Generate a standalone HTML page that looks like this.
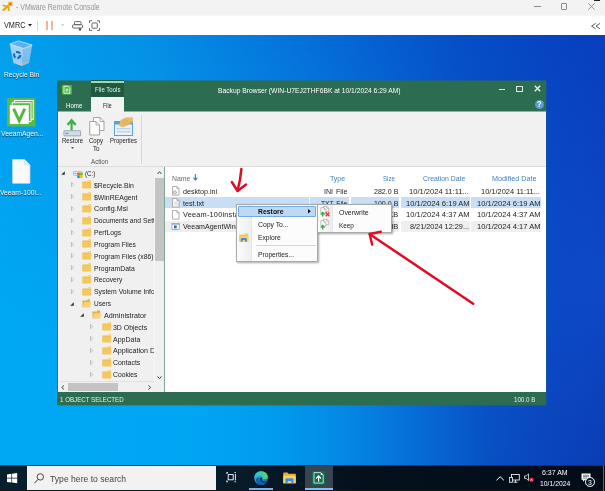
<!DOCTYPE html>
<html lang="en"><head><meta charset="utf-8"><title>VMware Remote Console</title><style>
html,body{margin:0;padding:0;overflow:hidden;}
body{width:605px;height:491px;overflow:hidden;position:relative;background:#0a50c0;font-family:"Liberation Sans",sans-serif;}
body div,body svg,body span.t{position:absolute;}
svg{overflow:visible;display:block;}
.t{white-space:nowrap;line-height:12px;transform-origin:0 50%;}
#desk{background:radial-gradient(ellipse 170px 260px at 100% 58%,rgba(18,86,220,.55) 0%,rgba(18,86,220,0) 100%),linear-gradient(90deg,#03a0ee 0%,#0590e6 25%,#0670da 50%,#0650c8 75%,#083ebe 100%);}
#desk2{background:radial-gradient(ellipse 170px 260px at 100% 58%,rgba(18,86,220,.55) 0%,rgba(18,86,220,0) 100%),linear-gradient(90deg,#00a8f4 0%,#00a6f3 30%,#019cee 45%,#0488e4 57%,#066cd6 69%,#0850c2 81%,#083fb4 93%,#0838ac 100%);-webkit-mask-image:linear-gradient(to bottom,rgba(0,0,0,0) 0%,rgba(0,0,0,1) 75%);mask-image:linear-gradient(to bottom,rgba(0,0,0,0) 0%,rgba(0,0,0,1) 75%);}
</style></head><body>
<div style="left:0px;top:0px;width:605px;height:16px;background:#f3f3f3;"></div>
<div style="left:0px;top:16px;width:605px;height:19px;background:#ffffff;"></div>
<div style="left:0px;top:15px;width:605px;height:1px;background:#f6f6f6;"></div>
<svg style="left:0px;top:0px;" width="14" height="14" viewBox="0 0 14 14"><path d="M3.4 10 L9.6 4.6" stroke="#f0a414" stroke-width="2.3" stroke-linecap="round"/><rect x="8.3" y="1.8" width="4.2" height="4.2" rx="0.6" fill="#f5b61a"/><circle cx="10.3" cy="4" r="0.95" fill="#e5482c"/><path d="M3.2 5.3 L7 6.7" stroke="#eea012" stroke-width="1.6" stroke-linecap="round"/><path d="M8.6 7.4 L9 10.4" stroke="#eea012" stroke-width="1.6" stroke-linecap="round"/></svg>
<span class="t" style="left:15.50px;top:2px;font-size:8.20px;color:#949494;transform:scaleX(0.8515);">- VMware Remote Console</span>
<div style="left:534.4px;top:6px;width:6.6px;height:1px;background:#8a8a8a;"></div>
<div style="left:561px;top:3.2px;width:6.4px;height:6.4px;background:transparent;border:1px solid #8a8a8a;box-sizing:border-box;border-radius:1px;"></div>
<svg style="left:588px;top:3px;" width="7" height="7" viewBox="0 0 7 7"><path d="M0.3 0.3 L6.7 6.7 M6.7 0.3 L0.3 6.7" stroke="#8a8a8a" stroke-width="0.9" fill="none"/></svg>
<div style="left:594px;top:0px;width:6px;height:1px;background:#222;"></div>
<span class="t" style="left:4.40px;top:20px;font-size:8.20px;color:#222;transform:scaleX(0.8876);">VMRC</span>
<svg style="left:28px;top:23.8px;" width="4" height="3" viewBox="0 0 4 3"><path d="M0 0 L4 0 L2 2.6 Z" fill="#222"/></svg>
<div style="left:37px;top:20.8px;width:1px;height:10px;background:#d8d8d8;"></div>
<div style="left:46.2px;top:20.8px;width:2px;height:9.2px;background:#f7b298;"></div>
<div style="left:51.4px;top:20.8px;width:2px;height:9.2px;background:#f7b298;"></div>
<svg style="left:60.5px;top:24.2px;" width="3.2" height="2.4" viewBox="0 0 4 3"><path d="M0 0 L4 0 L2 2.6 Z" fill="#c8c8c8"/></svg>
<svg style="left:71.5px;top:20.5px;" width="11.5" height="10.5" viewBox="0 0 23 21"><rect x="5" y="1.2" width="13" height="6" rx="1.5" fill="none" stroke="#444" stroke-width="1.6"/><rect x="1.2" y="7.6" width="20" height="6.4" rx="1.5" fill="#fff" stroke="#444" stroke-width="1.6"/><path d="M14 16 L18 16 L16 19.5 Z M16 13 L16 17" fill="#444" stroke="#444" stroke-width="1.4"/></svg>
<svg style="left:89.2px;top:19.6px;" width="11.2" height="11.2" viewBox="0 0 22 22"><path d="M1 6 V1.5 H6 M16 1.5 H20.5 V6 M20.5 16 V20.5 H16 M6 20.5 H1 V16" fill="none" stroke="#444" stroke-width="1.6"/><rect x="5.8" y="5.8" width="10.4" height="10.4" rx="1.5" fill="none" stroke="#444" stroke-width="1.6"/></svg>
<svg style="left:591px;top:22.6px;" width="9.6" height="6.2" viewBox="0 0 9.6 6.2"><path d="M4.6 0.4 L0.6 3.1 L4.6 5.8 M9 0.4 L5 3.1 L9 5.8" fill="none" stroke="#445" stroke-width="0.9"/></svg>
<div id="desk" style="left:0;top:35px;width:605px;height:430px;"></div>
<div id="desk2" style="left:0;top:35px;width:605px;height:430px;"></div>
<svg style="left:0px;top:0px;" width="48" height="80" viewBox="0 0 48 80"><defs><linearGradient id="rbl" x1="0" y1="0" x2="0" y2="1"><stop offset="0" stop-color="#cfe4f6" stop-opacity=".8"/><stop offset=".75" stop-color="#c4ddf2" stop-opacity=".75"/><stop offset="1" stop-color="#e8cdbd" stop-opacity=".9"/></linearGradient><linearGradient id="rbr" x1="0" y1="0" x2="0" y2="1"><stop offset="0" stop-color="#a9cdec" stop-opacity=".8"/><stop offset=".75" stop-color="#9fc6e8" stop-opacity=".75"/><stop offset="1" stop-color="#dcc0b0" stop-opacity=".9"/></linearGradient></defs><path d="M9.8 44.1 L23.7 48.5 L21.9 66 L13.4 62.9 Z" fill="url(#rbl)"/><path d="M23.7 48.5 L32.2 45 L29.1 62.9 L21.9 66 Z" fill="url(#rbr)"/><path d="M9.8 44.1 L18.4 40.9 L32.2 45 L23.7 48.5 Z" fill="#7fb6e6" fill-opacity=".75" stroke="#e4f0fa" stroke-width="0.7"/><circle cx="17.2" cy="55" r="3.1" fill="none" stroke="#1565c8" stroke-width="2" stroke-dasharray="4.6 1.9"/></svg>
<span class="t" style="left:4.00px;top:69px;font-size:7.60px;color:#fff;transform:scaleX(0.8779);text-shadow:0 0.5px 1px rgba(0,0,0,.7);">Recycle Bin</span>
<svg style="left:0px;top:90px;" width="48" height="40" viewBox="0 90 48 40"><rect x="7" y="98.1" width="28.4" height="28.4" fill="#5bb947"/><rect x="14.4" y="100.5" width="18.8" height="18.8" fill="none" stroke="#fff" stroke-width="1"/><rect x="12.2" y="102.7" width="18.8" height="18.8" fill="#5bb947" stroke="#fff" stroke-width="1"/><rect x="9.8" y="105.2" width="19" height="18.7" fill="#fff"/><path d="M13.6 108.6 L19.2 120.6 L24.8 108.6" fill="none" stroke="#56b544" stroke-width="3" stroke-linejoin="miter"/></svg>
<span class="t" style="left:0.50px;top:128px;font-size:7.60px;color:#fff;transform:scaleX(0.8906);text-shadow:0 0.5px 1px rgba(0,0,0,.7);">VeeamAgen...</span>
<svg style="left:11.9px;top:158.5px;" width="18.6" height="24.8" viewBox="0 0 37 50"><path d="M1 1 H25 L36 12 V49 H1 Z" fill="#fafafa" stroke="#d8dde2" stroke-width="1.4"/><path d="M25 1 V12 H36 Z" fill="#e4e8ec" stroke="#cfd5da" stroke-width="1"/></svg>
<span class="t" style="left:0.30px;top:187px;font-size:7.60px;color:#fff;transform:scaleX(0.8856);text-shadow:0 0.5px 1px rgba(0,0,0,.7);">Veeam-100i...</span>
<div style="left:57px;top:81px;width:489px;height:324px;background:#2c6c50;"></div>
<div style="left:57px;top:80px;width:489px;height:1px;background:#2c6c50;opacity:.5;"></div>
<div style="left:57px;top:405px;width:489px;height:1px;background:#2c6c50;opacity:.4;"></div>
<div style="left:546px;top:80.5px;width:1px;height:325px;background:#2c6c50;opacity:.3;"></div>
<div style="left:58px;top:111px;width:487.6px;height:281px;background:#ffffff;"></div>
<div style="left:58px;top:111px;width:487.6px;height:1px;background:#8fb1a2;"></div>
<div style="left:91px;top:80px;width:32.5px;height:17px;background:#1f5a40;"></div>
<div style="left:91px;top:81px;width:32.5px;height:2.2px;background:#9bd9b6;"></div>
<span class="t" style="left:94.60px;top:84px;font-size:6.90px;color:#e4f2ea;transform:scaleX(0.8798);">File Tools</span>
<div style="left:91px;top:97px;width:32.5px;height:15px;background:#f3f3f3;"></div>
<span class="t" style="left:102.90px;top:100px;font-size:6.90px;color:#222;transform:scaleX(0.7741);">File</span>
<span class="t" style="left:66.20px;top:100px;font-size:6.90px;color:#fff;transform:scaleX(0.8863);">Home</span>
<svg style="left:62px;top:84.6px;" width="9.8" height="9.6" viewBox="0 0 20 19.6"><rect width="20" height="19.6" fill="#4cb848"/><path d="M4 2.5 H12.5 L16 6 V17 H4 Z" fill="none" stroke="#fff" stroke-width="1.6"/><path d="M10 15 V8.5 M6.8 11 L10 7.6 L13.2 11" fill="none" stroke="#fff" stroke-width="1.8"/></svg>
<span class="t" style="left:217.50px;top:85px;font-size:7.60px;color:#fff;transform:scaleX(0.8861);">Backup Browser (WIN-U7EJ2THF6BK at 10/1/2024 6:29 AM)</span>
<div style="left:499.2px;top:89.3px;width:6px;height:1.2px;background:#e6efea;"></div>
<div style="left:516.4px;top:85.8px;width:6.6px;height:6.2px;background:transparent;border:0.8px solid #dde8e2;border-top-width:1.7px;box-sizing:border-box;"></div>
<svg style="left:533.6px;top:85.4px;" width="7" height="7" viewBox="0 0 7 7"><path d="M0.8 0.8 L6.2 6.2 M6.2 0.8 L0.8 6.2" stroke="#eef4f1" stroke-width="1.3" fill="none"/></svg>
<div style="left:534.6px;top:99.5px;width:9.2px;height:9.2px;border-radius:50%;background:#5a9bd6;"></div>
<span class="t" style="left:536.90px;top:98px;font-size:8.60px;color:#fff;font-weight:bold;transform:scaleX(0.8762);">?</span>
<div style="left:59px;top:112px;width:486.6px;height:54px;background:#f1f1f1;"></div>
<div style="left:58px;top:166px;width:487.6px;height:1px;background:#dcdcdc;"></div>
<div style="left:141px;top:114.6px;width:1px;height:49.6px;background:#d6d6d6;"></div>
<svg style="left:63px;top:117.5px;" width="19" height="18.5" viewBox="0 0 38 37"><path d="M17.2 1.2 L7.4 12 L10.6 15.4 L15 10.8 V25 H19.4 V10.8 L23.8 15.4 L27 12 Z" fill="#3fb24a"/><rect x="1.8" y="25.4" width="33.4" height="10.4" rx="1" fill="#cfdcee" stroke="#8794a6" stroke-width="1.5"/><rect x="5.2" y="29.6" width="5.6" height="2.2" fill="#3cae49"/></svg>
<span class="t" style="left:61.60px;top:135px;font-size:6.90px;color:#222;transform:scaleX(0.8782);">Restore</span>
<svg style="left:70.9px;top:146.6px;" width="3" height="2.2" viewBox="0 0 4 3"><path d="M0 0 L4 0 L2 2.8 Z" fill="#555"/></svg>
<svg style="left:89px;top:117.2px;" width="16" height="18.5" viewBox="0 0 32 37"><path d="M9 1 H22 L30 9 V27 H9 Z" fill="#fdfdfd" stroke="#8a8a8a" stroke-width="1.5"/><path d="M22 1 V9 H30" fill="none" stroke="#8a8a8a" stroke-width="1.3"/><path d="M1.5 9 H14 L21 16 V36 H1.5 Z" fill="#fdfdfd" stroke="#8a8a8a" stroke-width="1.5"/><path d="M14 9 V16 H21" fill="none" stroke="#8a8a8a" stroke-width="1.3"/></svg>
<span class="t" style="left:89.20px;top:135px;font-size:6.90px;color:#222;transform:scaleX(0.8761);">Copy</span>
<span class="t" style="left:93.00px;top:143px;font-size:6.90px;color:#222;transform:scaleX(0.9064);">To</span>
<svg style="left:113.5px;top:116.8px;" width="19.5" height="19" viewBox="0 0 39 38"><rect x="1" y="9" width="36" height="28" fill="#eaf3fb" stroke="#5f9fd8" stroke-width="2"/><rect x="1" y="9" width="36" height="6" fill="#5f9fd8"/><rect x="5" y="22" width="28" height="3" fill="#bcd6ee"/><rect x="5" y="28" width="28" height="3" fill="#bcd6ee"/><path d="M10 18 L13 6 L24 0.5 L38 0.5 L38 9 L30 15 L18 21 Z" fill="#e9bc6a"/><path d="M14 12 L24 4 M18 15 L29 6 M23 17 L34 8" stroke="#d9a44a" stroke-width="1.4"/></svg>
<span class="t" style="left:109.90px;top:135px;font-size:6.90px;color:#222;transform:scaleX(0.8565);">Properties</span>
<span class="t" style="left:91.40px;top:156px;font-size:6.90px;color:#555;transform:scaleX(0.9031);">Action</span>
<div style="left:59px;top:167px;width:96px;height:215px;background:#f0f0f0;"></div>
<div style="left:164px;top:167px;width:1px;height:225px;background:#7fa595;"></div>
<div style="left:154px;top:167px;width:10px;height:215px;background:#f0f0f0;"></div>
<div style="left:154px;top:167px;width:1px;height:215px;background:#f7f7f7;"></div>
<div style="left:155px;top:177.6px;width:9px;height:83px;background:#c4c4c4;"></div>
<svg style="left:157px;top:170.8px;" width="5" height="3.4" viewBox="0 0 5 3.4"><path d="M0.5 3 L2.5 0.7 L4.5 3" fill="none" stroke="#444" stroke-width="1"/></svg>
<svg style="left:157px;top:375.6px;" width="5" height="3.4" viewBox="0 0 5 3.4"><path d="M0.5 0.4 L2.5 2.7 L4.5 0.4" fill="none" stroke="#444" stroke-width="1"/></svg>
<div style="left:59px;top:381px;width:95px;height:1px;background:#d3e5f7;"></div>
<div style="left:59px;top:382px;width:105px;height:10px;background:#f0f0f0;"></div>
<div style="left:67.9px;top:383px;width:50.6px;height:8.2px;background:#c4c4c4;"></div>
<svg style="left:60.6px;top:384.6px;" width="3.4" height="5" viewBox="0 0 3.4 5"><path d="M3 0.5 L0.7 2.5 L3 4.5" fill="none" stroke="#444" stroke-width="1"/></svg>
<svg style="left:147.6px;top:384.6px;" width="3.4" height="5" viewBox="0 0 3.4 5"><path d="M0.4 0.5 L2.7 2.5 L0.4 4.5" fill="none" stroke="#444" stroke-width="1"/></svg>
<div style="left:0;top:0;width:153.8px;height:382px;overflow:hidden;">
<svg style="left:60.8px;top:171.4px;" width="4" height="4" viewBox="0 0 4 4"><path d="M3.8 0.2 V3.8 H0.2 Z" fill="#333"/></svg>
<svg style="left:72.9px;top:170.8px;" width="10" height="7.4" viewBox="0 0 20 14.8"><rect x="0.8" y="0.8" width="17" height="8" rx="1" fill="#e4effa" stroke="#8bb8e6" stroke-width="1.5"/><rect x="3" y="3.6" width="3.4" height="2" fill="#5f9ad6"/><rect x="8.4" y="3.2" width="5.2" height="5.2" fill="#f25022"/><rect x="14.2" y="3.2" width="5.2" height="5.2" fill="#7fba00"/><rect x="8.4" y="9" width="5.2" height="5.2" fill="#00a4ef"/><rect x="14.2" y="9" width="5.2" height="5.2" fill="#ffb900"/></svg>
<span class="t" style="left:84.90px;top:168px;font-size:7.60px;color:#222;transform:scaleX(0.8059);">(C:)</span>
<svg style="left:70.9px;top:182.43px;" width="3.2" height="5.2" viewBox="0 0 3.2 5.2"><path d="M0.5 0.5 L2.7 2.6 L0.5 4.7 Z" fill="#fff" stroke="#a6a6a6" stroke-width="0.7"/></svg>
<svg style="left:81.9px;top:180.33px;" width="9.5" height="8.6" viewBox="0 0 18 17"><path d="M0.5 3.2 H11 L12.6 0.6 H17 Q17.6 0.6 17.6 1.4 V16.5 H0.5 Z" fill="#eebc4c"/><path d="M0.5 5 H17.6 V16.5 H0.5 Z" fill="#f3c95f"/><path d="M12.9 1.2 H17 V3.4 H11.6 Z" fill="#f9e3a4"/></svg>
<span class="t" style="left:94.10px;top:180px;font-size:7.60px;color:#222;transform:scaleX(0.9001);">$Recycle.Bin</span>
<svg style="left:70.9px;top:194.26px;" width="3.2" height="5.2" viewBox="0 0 3.2 5.2"><path d="M0.5 0.5 L2.7 2.6 L0.5 4.7 Z" fill="#fff" stroke="#a6a6a6" stroke-width="0.7"/></svg>
<svg style="left:81.9px;top:192.16px;" width="9.5" height="8.6" viewBox="0 0 18 17"><path d="M0.5 3.2 H11 L12.6 0.6 H17 Q17.6 0.6 17.6 1.4 V16.5 H0.5 Z" fill="#eebc4c"/><path d="M0.5 5 H17.6 V16.5 H0.5 Z" fill="#f3c95f"/><path d="M12.9 1.2 H17 V3.4 H11.6 Z" fill="#f9e3a4"/></svg>
<span class="t" style="left:94.10px;top:192px;font-size:7.60px;color:#222;transform:scaleX(0.9077);">$WinREAgent</span>
<svg style="left:70.9px;top:206.09px;" width="3.2" height="5.2" viewBox="0 0 3.2 5.2"><path d="M0.5 0.5 L2.7 2.6 L0.5 4.7 Z" fill="#fff" stroke="#a6a6a6" stroke-width="0.7"/></svg>
<svg style="left:81.9px;top:203.99px;" width="9.5" height="8.6" viewBox="0 0 18 17"><path d="M0.5 3.2 H11 L12.6 0.6 H17 Q17.6 0.6 17.6 1.4 V16.5 H0.5 Z" fill="#eebc4c"/><path d="M0.5 5 H17.6 V16.5 H0.5 Z" fill="#f3c95f"/><path d="M12.9 1.2 H17 V3.4 H11.6 Z" fill="#f9e3a4"/></svg>
<span class="t" style="left:94.10px;top:203px;font-size:7.60px;color:#222;transform:scaleX(0.9422);">Config.Msi</span>
<svg style="left:70.9px;top:217.92px;" width="3.2" height="5.2" viewBox="0 0 3.2 5.2"><path d="M0.5 0.5 L2.7 2.6 L0.5 4.7 Z" fill="#fff" stroke="#a6a6a6" stroke-width="0.7"/></svg>
<svg style="left:81.9px;top:215.82px;" width="9.5" height="8.6" viewBox="0 0 18 17"><path d="M0.5 3.2 H11 L12.6 0.6 H17 Q17.6 0.6 17.6 1.4 V16.5 H0.5 Z" fill="#eebc4c"/><path d="M0.5 5 H17.6 V16.5 H0.5 Z" fill="#f3c95f"/><path d="M12.9 1.2 H17 V3.4 H11.6 Z" fill="#f9e3a4"/></svg>
<span class="t" style="left:94.10px;top:215px;font-size:7.60px;color:#222;transform:scaleX(0.885);">Documents and Settings</span>
<svg style="left:70.9px;top:229.75px;" width="3.2" height="5.2" viewBox="0 0 3.2 5.2"><path d="M0.5 0.5 L2.7 2.6 L0.5 4.7 Z" fill="#fff" stroke="#a6a6a6" stroke-width="0.7"/></svg>
<svg style="left:81.9px;top:227.65px;" width="9.5" height="8.6" viewBox="0 0 18 17"><path d="M0.5 3.2 H11 L12.6 0.6 H17 Q17.6 0.6 17.6 1.4 V16.5 H0.5 Z" fill="#eebc4c"/><path d="M0.5 5 H17.6 V16.5 H0.5 Z" fill="#f3c95f"/><path d="M12.9 1.2 H17 V3.4 H11.6 Z" fill="#f9e3a4"/></svg>
<span class="t" style="left:94.10px;top:227px;font-size:7.60px;color:#222;transform:scaleX(0.8913);">PerfLogs</span>
<svg style="left:70.9px;top:241.58px;" width="3.2" height="5.2" viewBox="0 0 3.2 5.2"><path d="M0.5 0.5 L2.7 2.6 L0.5 4.7 Z" fill="#fff" stroke="#a6a6a6" stroke-width="0.7"/></svg>
<svg style="left:81.9px;top:239.48px;" width="9.5" height="8.6" viewBox="0 0 18 17"><path d="M0.5 3.2 H11 L12.6 0.6 H17 Q17.6 0.6 17.6 1.4 V16.5 H0.5 Z" fill="#eebc4c"/><path d="M0.5 5 H17.6 V16.5 H0.5 Z" fill="#f3c95f"/><path d="M12.9 1.2 H17 V3.4 H11.6 Z" fill="#f9e3a4"/></svg>
<span class="t" style="left:94.10px;top:239px;font-size:7.60px;color:#222;transform:scaleX(0.8865);">Program Files</span>
<svg style="left:70.9px;top:253.41px;" width="3.2" height="5.2" viewBox="0 0 3.2 5.2"><path d="M0.5 0.5 L2.7 2.6 L0.5 4.7 Z" fill="#fff" stroke="#a6a6a6" stroke-width="0.7"/></svg>
<svg style="left:81.9px;top:251.31px;" width="9.5" height="8.6" viewBox="0 0 18 17"><path d="M0.5 3.2 H11 L12.6 0.6 H17 Q17.6 0.6 17.6 1.4 V16.5 H0.5 Z" fill="#eebc4c"/><path d="M0.5 5 H17.6 V16.5 H0.5 Z" fill="#f3c95f"/><path d="M12.9 1.2 H17 V3.4 H11.6 Z" fill="#f9e3a4"/></svg>
<span class="t" style="left:94.10px;top:251px;font-size:7.60px;color:#222;transform:scaleX(0.8924);">Program Files (x86)</span>
<svg style="left:70.9px;top:265.24px;" width="3.2" height="5.2" viewBox="0 0 3.2 5.2"><path d="M0.5 0.5 L2.7 2.6 L0.5 4.7 Z" fill="#fff" stroke="#a6a6a6" stroke-width="0.7"/></svg>
<svg style="left:81.9px;top:263.14px;" width="9.5" height="8.6" viewBox="0 0 18 17"><path d="M0.5 3.2 H11 L12.6 0.6 H17 Q17.6 0.6 17.6 1.4 V16.5 H0.5 Z" fill="#eebc4c"/><path d="M0.5 5 H17.6 V16.5 H0.5 Z" fill="#f3c95f"/><path d="M12.9 1.2 H17 V3.4 H11.6 Z" fill="#f9e3a4"/></svg>
<span class="t" style="left:94.10px;top:263px;font-size:7.60px;color:#222;transform:scaleX(0.9010);">ProgramData</span>
<svg style="left:70.9px;top:277.07px;" width="3.2" height="5.2" viewBox="0 0 3.2 5.2"><path d="M0.5 0.5 L2.7 2.6 L0.5 4.7 Z" fill="#fff" stroke="#a6a6a6" stroke-width="0.7"/></svg>
<svg style="left:81.9px;top:274.97px;" width="9.5" height="8.6" viewBox="0 0 18 17"><path d="M0.5 3.2 H11 L12.6 0.6 H17 Q17.6 0.6 17.6 1.4 V16.5 H0.5 Z" fill="#eebc4c"/><path d="M0.5 5 H17.6 V16.5 H0.5 Z" fill="#f3c95f"/><path d="M12.9 1.2 H17 V3.4 H11.6 Z" fill="#f9e3a4"/></svg>
<span class="t" style="left:94.10px;top:274px;font-size:7.60px;color:#222;transform:scaleX(0.8822);">Recovery</span>
<svg style="left:70.9px;top:288.9px;" width="3.2" height="5.2" viewBox="0 0 3.2 5.2"><path d="M0.5 0.5 L2.7 2.6 L0.5 4.7 Z" fill="#fff" stroke="#a6a6a6" stroke-width="0.7"/></svg>
<svg style="left:81.9px;top:286.8px;" width="9.5" height="8.6" viewBox="0 0 18 17"><path d="M0.5 3.2 H11 L12.6 0.6 H17 Q17.6 0.6 17.6 1.4 V16.5 H0.5 Z" fill="#eebc4c"/><path d="M0.5 5 H17.6 V16.5 H0.5 Z" fill="#f3c95f"/><path d="M12.9 1.2 H17 V3.4 H11.6 Z" fill="#f9e3a4"/></svg>
<span class="t" style="left:94.10px;top:286px;font-size:7.60px;color:#222;transform:scaleX(0.9);">System Volume Information</span>
<svg style="left:70.3px;top:301.53px;" width="4" height="4" viewBox="0 0 4 4"><path d="M3.8 0.2 V3.8 H0.2 Z" fill="#333"/></svg>
<svg style="left:81.9px;top:298.63px;" width="10" height="8.6" viewBox="0 0 19 17"><path d="M0.5 3.2 H9 L10.6 0.6 H15 Q15.6 0.6 15.6 1.4 V16.5 H0.5 Z" fill="#e2b345"/><path d="M3.6 6.4 H18.6 L15.6 16.5 H0.5 Z" fill="#f6d47a"/></svg>
<span class="t" style="left:94.10px;top:298px;font-size:7.60px;color:#222;transform:scaleX(0.8517);">Users</span>
<svg style="left:79.8px;top:313.36px;" width="4" height="4" viewBox="0 0 4 4"><path d="M3.8 0.2 V3.8 H0.2 Z" fill="#333"/></svg>
<svg style="left:91.9px;top:310.46px;" width="10" height="8.6" viewBox="0 0 19 17"><path d="M0.5 3.2 H9 L10.6 0.6 H15 Q15.6 0.6 15.6 1.4 V16.5 H0.5 Z" fill="#e2b345"/><path d="M3.6 6.4 H18.6 L15.6 16.5 H0.5 Z" fill="#f6d47a"/></svg>
<span class="t" style="left:103.80px;top:310px;font-size:7.60px;color:#222;transform:scaleX(0.9478);">Administrator</span>
<svg style="left:89.9px;top:324.39px;" width="3.2" height="5.2" viewBox="0 0 3.2 5.2"><path d="M0.5 0.5 L2.7 2.6 L0.5 4.7 Z" fill="#fff" stroke="#a6a6a6" stroke-width="0.7"/></svg>
<svg style="left:101.7px;top:322.29px;" width="9.5" height="8.6" viewBox="0 0 18 17"><path d="M0.5 3.2 H11 L12.6 0.6 H17 Q17.6 0.6 17.6 1.4 V16.5 H0.5 Z" fill="#eebc4c"/><path d="M0.5 5 H17.6 V16.5 H0.5 Z" fill="#f3c95f"/><path d="M12.9 1.2 H17 V3.4 H11.6 Z" fill="#f9e3a4"/></svg>
<span class="t" style="left:113.00px;top:322px;font-size:7.60px;color:#222;transform:scaleX(0.9105);">3D Objects</span>
<svg style="left:89.9px;top:336.22px;" width="3.2" height="5.2" viewBox="0 0 3.2 5.2"><path d="M0.5 0.5 L2.7 2.6 L0.5 4.7 Z" fill="#fff" stroke="#a6a6a6" stroke-width="0.7"/></svg>
<svg style="left:101.7px;top:334.12px;" width="9.5" height="8.6" viewBox="0 0 18 17"><path d="M0.5 3.2 H11 L12.6 0.6 H17 Q17.6 0.6 17.6 1.4 V16.5 H0.5 Z" fill="#eebc4c"/><path d="M0.5 5 H17.6 V16.5 H0.5 Z" fill="#f3c95f"/><path d="M12.9 1.2 H17 V3.4 H11.6 Z" fill="#f9e3a4"/></svg>
<span class="t" style="left:113.00px;top:334px;font-size:7.60px;color:#222;transform:scaleX(0.9235);">AppData</span>
<svg style="left:89.9px;top:348.05px;" width="3.2" height="5.2" viewBox="0 0 3.2 5.2"><path d="M0.5 0.5 L2.7 2.6 L0.5 4.7 Z" fill="#fff" stroke="#a6a6a6" stroke-width="0.7"/></svg>
<svg style="left:101.7px;top:345.95px;" width="9.5" height="8.6" viewBox="0 0 18 17"><path d="M0.5 3.2 H11 L12.6 0.6 H17 Q17.6 0.6 17.6 1.4 V16.5 H0.5 Z" fill="#eebc4c"/><path d="M0.5 5 H17.6 V16.5 H0.5 Z" fill="#f3c95f"/><path d="M12.9 1.2 H17 V3.4 H11.6 Z" fill="#f9e3a4"/></svg>
<span class="t" style="left:113.00px;top:345px;font-size:7.60px;color:#222;transform:scaleX(0.94);">Application Data</span>
<svg style="left:89.9px;top:359.88px;" width="3.2" height="5.2" viewBox="0 0 3.2 5.2"><path d="M0.5 0.5 L2.7 2.6 L0.5 4.7 Z" fill="#fff" stroke="#a6a6a6" stroke-width="0.7"/></svg>
<svg style="left:101.7px;top:357.78px;" width="9.5" height="8.6" viewBox="0 0 18 17"><path d="M0.5 3.2 H11 L12.6 0.6 H17 Q17.6 0.6 17.6 1.4 V16.5 H0.5 Z" fill="#eebc4c"/><path d="M0.5 5 H17.6 V16.5 H0.5 Z" fill="#f3c95f"/><path d="M12.9 1.2 H17 V3.4 H11.6 Z" fill="#f9e3a4"/></svg>
<span class="t" style="left:113.00px;top:357px;font-size:7.60px;color:#222;transform:scaleX(0.9109);">Contacts</span>
<svg style="left:89.9px;top:371.71px;" width="3.2" height="5.2" viewBox="0 0 3.2 5.2"><path d="M0.5 0.5 L2.7 2.6 L0.5 4.7 Z" fill="#fff" stroke="#a6a6a6" stroke-width="0.7"/></svg>
<svg style="left:101.7px;top:369.61px;" width="9.5" height="8.6" viewBox="0 0 18 17"><path d="M0.5 3.2 H11 L12.6 0.6 H17 Q17.6 0.6 17.6 1.4 V16.5 H0.5 Z" fill="#eebc4c"/><path d="M0.5 5 H17.6 V16.5 H0.5 Z" fill="#f3c95f"/><path d="M12.9 1.2 H17 V3.4 H11.6 Z" fill="#f9e3a4"/></svg>
<span class="t" style="left:113.00px;top:369px;font-size:7.60px;color:#222;transform:scaleX(0.8893);">Cookies</span>
<svg style="left:101.7px;top:381.44px;" width="9.5" height="8.6" viewBox="0 0 18 17"><path d="M0.5 3.2 H11 L12.6 0.6 H17 Q17.6 0.6 17.6 1.4 V16.5 H0.5 Z" fill="#eebc4c"/><path d="M0.5 5 H17.6 V16.5 H0.5 Z" fill="#f3c95f"/><path d="M12.9 1.2 H17 V3.4 H11.6 Z" fill="#f9e3a4"/></svg>
</div>
<span class="t" style="left:171.80px;top:173px;font-size:7.60px;color:#6a6a6a;transform:scaleX(0.9030);">Name</span>
<svg style="left:193px;top:174.2px;" width="4.8" height="6.8" viewBox="0 0 4.8 6.8"><path d="M2.4 0 V5.4 M0.5 3.6 L2.4 6 L4.3 3.6" fill="none" stroke="#2f7fd0" stroke-width="1.1"/></svg>
<span class="t" style="left:330.10px;top:173px;font-size:7.60px;color:#3f7fc0;transform:scaleX(0.9169);">Type</span>
<span class="t" style="left:383.30px;top:173px;font-size:7.60px;color:#3f7fc0;transform:scaleX(0.8051);">Size</span>
<span class="t" style="left:422.50px;top:173px;font-size:7.60px;color:#3f7fc0;transform:scaleX(0.9027);">Creation Date</span>
<span class="t" style="left:491.80px;top:173px;font-size:7.60px;color:#3f7fc0;transform:scaleX(0.9496);">Modified Date</span>
<div style="left:165px;top:197.4px;width:144px;height:10.4px;background:#c7def5;"></div>
<div style="left:165px;top:221px;width:144px;height:10.6px;background:#efefef;"></div>
<div style="left:310.3px;top:197.4px;width:39px;height:10.4px;background:#c7def5;"></div>
<div style="left:310.3px;top:221px;width:39px;height:10.6px;background:#efefef;"></div>
<div style="left:350.5px;top:197.4px;width:48.8px;height:10.4px;background:#c7def5;"></div>
<div style="left:350.5px;top:221px;width:48.8px;height:10.6px;background:#efefef;"></div>
<div style="left:400.5px;top:197.4px;width:69.5px;height:10.4px;background:#c7def5;"></div>
<div style="left:400.5px;top:221px;width:69.5px;height:10.6px;background:#efefef;"></div>
<div style="left:471.2px;top:197.4px;width:70.1px;height:10.4px;background:#c7def5;"></div>
<div style="left:471.2px;top:221px;width:70.1px;height:10.6px;background:#efefef;"></div>
<div style="left:0;top:0;width:309px;height:392px;overflow:hidden;">
<span class="t" style="left:182.80px;top:186px;font-size:7.60px;color:#222;transform:scaleX(0.9418);">desktop.ini</span>
<span class="t" style="left:182.80px;top:198px;font-size:7.60px;color:#222;transform:scaleX(0.9385);">test.txt</span>
<span class="t" style="left:182.80px;top:209px;font-size:7.60px;color:#222;transform:scaleX(0.97);letter-spacing:0.2px;">Veeam-100instal...</span>
<span class="t" style="left:182.80px;top:221px;font-size:7.60px;color:#222;transform:scaleX(0.93);">VeeamAgentWindows_...</span>
</div>
<svg style="left:171.5px;top:186.1px;" width="7.6" height="9.7" viewBox="0 0 8.6 11"><path d="M0.6 0.6 H5.6 L8 3 V10.4 H0.6 Z" fill="#fff" stroke="#999" stroke-width="0.9"/><path d="M5.6 0.6 V3 H8" fill="none" stroke="#999" stroke-width="0.8"/><circle cx="3.4" cy="7.2" r="1.8" fill="#ddd" stroke="#888" stroke-width="1" stroke-dasharray="1.2 0.7"/></svg>
<svg style="left:171.5px;top:198px;" width="7.6" height="9.7" viewBox="0 0 8.6 11"><path d="M0.6 0.6 H5.6 L8 3 V10.4 H0.6 Z" fill="#fff" stroke="#999" stroke-width="0.9"/><path d="M5.6 0.6 V3 H8" fill="none" stroke="#999" stroke-width="0.8"/><path d="M2 4.5 H6.5 M2 6.3 H6.5 M2 8.1 H6.5" stroke="#c8c8c8" stroke-width="0.8"/></svg>
<svg style="left:171.5px;top:209.7px;" width="7.6" height="9.7" viewBox="0 0 8.6 11"><path d="M0.6 0.6 H5.6 L8 3 V10.4 H0.6 Z" fill="#fff" stroke="#999" stroke-width="0.9"/><path d="M5.6 0.6 V3 H8" fill="none" stroke="#999" stroke-width="0.8"/></svg>
<svg style="left:170.6px;top:223.1px;" width="9.2" height="6.8" viewBox="0 0 10 8.4"><rect x="0.5" y="0.5" width="9" height="7.4" fill="#fff" stroke="#7a8a9a" stroke-width="0.8"/><rect x="0.5" y="0.5" width="9" height="1.6" fill="#9ab"/><rect x="3" y="3" width="3.4" height="3.6" fill="#1e6fd0"/></svg>
<span class="t" style="left:324.20px;top:186px;font-size:7.60px;color:#222;transform:scaleX(0.9337);word-spacing:1px;">INI File</span>
<span class="t" style="left:373.80px;top:186px;font-size:7.60px;color:#222;transform:scaleX(0.9317);">282.0 B</span>
<span class="t" style="left:409.00px;top:186px;font-size:7.60px;color:#222;transform:scaleX(0.9949);">10/1/2024 11:11...</span>
<span class="t" style="left:480.50px;top:186px;font-size:7.60px;color:#222;transform:scaleX(0.9799);">10/1/2024 11:11...</span>
<span class="t" style="left:321.40px;top:198px;font-size:7.60px;color:#222;transform:scaleX(0.8863);word-spacing:1px;">TXT File</span>
<span class="t" style="left:373.80px;top:198px;font-size:7.60px;color:#222;transform:scaleX(0.9317);">100.0 B</span>
<span class="t" style="left:405.60px;top:198px;font-size:7.60px;color:#222;transform:scaleX(0.9990);">10/1/2024 6:19 AM</span>
<span class="t" style="left:476.70px;top:198px;font-size:7.60px;color:#222;transform:scaleX(0.9958);">10/1/2024 6:19 AM</span>
<span class="t" style="left:321.40px;top:209px;font-size:7.60px;color:#222;transform:scaleX(0.8577);word-spacing:1px;">EXE File</span>
<span class="t" style="left:376.00px;top:209px;font-size:7.60px;color:#222;transform:scaleX(0.9738);">1.2 KB</span>
<span class="t" style="left:405.60px;top:209px;font-size:7.60px;color:#222;transform:scaleX(0.9990);">10/1/2024 4:37 AM</span>
<span class="t" style="left:476.70px;top:209px;font-size:7.60px;color:#222;transform:scaleX(0.9958);">10/1/2024 4:37 AM</span>
<span class="t" style="left:321.40px;top:221px;font-size:7.60px;color:#222;transform:scaleX(0.8577);word-spacing:1px;">EXE File</span>
<span class="t" style="left:366.00px;top:221px;font-size:7.60px;color:#222;transform:scaleX(0.9903);">152.4 MB</span>
<span class="t" style="left:409.80px;top:221px;font-size:7.60px;color:#222;transform:scaleX(0.9635);">8/21/2024 12:29...</span>
<span class="t" style="left:476.70px;top:221px;font-size:7.60px;color:#222;transform:scaleX(0.9958);">10/1/2024 4:17 AM</span>
<div style="left:57px;top:392px;width:489px;height:13px;background:#2c6c50;"></div>
<span class="t" style="left:59.90px;top:394px;font-size:7.20px;color:#e6f0ea;transform:scaleX(0.8588);">1 OBJECT SELECTED</span>
<span class="t" style="left:513.70px;top:394px;font-size:7.20px;color:#e6f0ea;transform:scaleX(0.8595);">100.0 B</span>
<div style="left:236px;top:204px;width:82px;height:58px;background:#fcfcfc;border:1px solid #a9a9a9;box-sizing:border-box;box-shadow:1px 1px 2px rgba(0,0,0,.35);"></div>
<div style="left:237px;top:205px;width:13.8px;height:56px;background:linear-gradient(90deg,#fbfbfb,#eeeeee);"></div>
<div style="left:250.8px;top:205px;width:0.8px;height:56px;background:#e6e6e6;"></div>
<div style="left:237.9px;top:205.8px;width:78.2px;height:11.4px;background:#bdd9f4;border:1px solid #74aadf;box-sizing:border-box;border-radius:1px;"></div>
<span class="t" style="left:258.10px;top:206px;font-size:7.60px;color:#111;font-weight:bold;transform:scaleX(0.9052);">Restore</span>
<svg style="left:308.2px;top:208.8px;" width="2.8" height="4.6" viewBox="0 0 2.8 4.6"><path d="M0 0 L2.8 2.3 L0 4.6 Z" fill="#111"/></svg>
<span class="t" style="left:258.10px;top:219px;font-size:7.60px;color:#222;transform:scaleX(0.8983);">Copy To...</span>
<span class="t" style="left:258.10px;top:232px;font-size:7.60px;color:#222;transform:scaleX(0.8854);">Explore</span>
<div style="left:256.1px;top:245.4px;width:60px;height:1px;background:#d4d4d4;"></div>
<span class="t" style="left:258.10px;top:249px;font-size:7.60px;color:#222;transform:scaleX(0.8791);">Properties...</span>
<svg style="left:239.1px;top:233px;" width="9.6" height="9" viewBox="0 0 19 18"><path d="M0.5 3.4 H10 L11.8 0.8 H17.5 Q18.5 0.8 18.5 2 V17 H0.5 Z" fill="#f0c04e"/><path d="M0.5 6 H18.5 V17 H0.5 Z" fill="#f6d06a"/><path d="M12.2 1.6 H17.8 V3.6 H10.8 Z" fill="#fae6ac"/><path d="M3.5 17.5 V12.5 Q3.5 10 6 10 H13 Q15.5 10 15.5 12.5 V17.5 H12 V14 H7 V17.5 Z" fill="#3b8fdc"/></svg>
<div style="left:317px;top:204px;width:75px;height:29px;background:#fcfcfc;border:1px solid #a9a9a9;box-sizing:border-box;box-shadow:1px 1px 2px rgba(0,0,0,.35);"></div>
<span class="t" style="left:338.70px;top:207px;font-size:7.60px;color:#222;transform:scaleX(0.9138);">Overwrite</span>
<span class="t" style="left:338.70px;top:220px;font-size:7.60px;color:#222;transform:scaleX(0.8394);">Keep</span>
<div style="left:318px;top:205px;width:14.2px;height:27px;background:linear-gradient(90deg,#fbfbfb,#eeeeee);"></div>
<div style="left:332.2px;top:205px;width:0.8px;height:27px;background:#e6e6e6;"></div>
<svg style="left:319.6px;top:206.4px;" width="10.4" height="10.8" viewBox="0 0 20.8 21.6"><path d="M7 0.8 H13.6 L17.4 4.6 V11.4 H7 Z" fill="#fff" stroke="#8e8e8e" stroke-width="1.1"/><path d="M13.6 0.8 V4.6 H17.4" fill="none" stroke="#8e8e8e" stroke-width="0.9"/><path d="M1.8 3.4 H8.2 L12 7.2 V14 H1.8 Z" fill="#fff" stroke="#8e8e8e" stroke-width="1.1"/><path d="M8.2 3.4 V7.2 H12" fill="none" stroke="#8e8e8e" stroke-width="0.9"/><path d="M5.4 21 V14.6 M1.4 17.4 L5.4 13 L9.4 17.4" fill="none" stroke="#2fae3f" stroke-width="2.5"/><path d="M11.4 12.8 L19 20.4 M19 12.8 L11.4 20.4" stroke="#e8353a" stroke-width="2.8"/></svg>
<svg style="left:319.6px;top:219.2px;" width="10.4" height="10.8" viewBox="0 0 20.8 21.6"><path d="M7 0.8 H13.6 L17.4 4.6 V11.4 H7 Z" fill="#fff" stroke="#8e8e8e" stroke-width="1.1"/><path d="M13.6 0.8 V4.6 H17.4" fill="none" stroke="#8e8e8e" stroke-width="0.9"/><path d="M1.8 3.4 H8.2 L12 7.2 V14 H1.8 Z" fill="#fff" stroke="#8e8e8e" stroke-width="1.1"/><path d="M8.2 3.4 V7.2 H12" fill="none" stroke="#8e8e8e" stroke-width="0.9"/><path d="M5.4 21 V14.6 M1.4 17.4 L5.4 13 L9.4 17.4" fill="none" stroke="#2fae3f" stroke-width="2.5"/></svg>
<svg style="left:0px;top:0px;pointer-events:none;" width="605" height="491" viewBox="0 0 605 491"><g fill="none" stroke="#e30a24" stroke-linecap="round" stroke-linejoin="round"><path d="M241.4 168.9 Q240.4 180 237.6 190.6" stroke-width="2.5"/><path d="M231.8 182 L237.6 191 L246 184.6" stroke-width="2.5"/><path d="M473.2 303.8 L369.8 234.2" stroke-width="2.5"/><path d="M380.8 231.8 L369.6 234 L372.2 244.6" stroke-width="2.4"/></g></svg>
<div style="left:0px;top:466px;width:605px;height:25px;background:linear-gradient(90deg,#061f2d 0%,#071b29 40%,#04111d 60%,#020c18 100%);"></div>
<div style="left:0px;top:465px;width:605px;height:1px;background:linear-gradient(90deg,#061f2d 0%,#071b29 40%,#04111d 60%,#020c18 100%);opacity:.42;"></div>
<div style="left:0px;top:490px;width:605px;height:1px;background:#12161a;"></div>
<svg style="left:7.4px;top:473px;" width="10.2" height="10.3" viewBox="0 0 10.2 10.3"><path d="M0 1.4 L4.4 0.8 V4.8 H0 Z M5.1 0.7 L10.2 0 V4.8 H5.1 Z M0 5.5 H4.4 V9.5 L0 8.9 Z M5.1 5.5 H10.2 V10.3 L5.1 9.6 Z" fill="#fff"/></svg>
<div style="left:26.6px;top:466px;width:189.4px;height:23.5px;background:#f2f2f2;"></div>
<div style="left:26.6px;top:489px;width:189.4px;height:1px;background:#f2f2f2;opacity:.4;"></div>
<svg style="left:33.8px;top:472.6px;" width="10" height="10.6" viewBox="0 0 10 10.6"><circle cx="6.3" cy="3.9" r="3.2" fill="none" stroke="#333" stroke-width="0.9"/><path d="M4.1 6.4 L0.5 10.1" stroke="#333" stroke-width="1"/></svg>
<span class="t" style="left:50.20px;top:473px;font-size:9.00px;color:#444;transform:scaleX(0.9567);">Type here to search</span>
<svg style="left:225.6px;top:472.2px;" width="10.4" height="10.4" viewBox="0 0 10.4 10.4"><rect x="2.2" y="2.6" width="5" height="5.2" fill="none" stroke="#fff" stroke-width="0.9"/><path d="M0.5 0.6 H2 M0.5 9.8 H2 M8.4 0.6 H9.9 M8.4 9.8 H9.9 M9.4 2 V8.4 M0.9 0.6 V2 M0.9 8.4 V9.8" stroke="#fff" stroke-width="0.9" fill="none"/></svg>
<svg style="left:253.6px;top:471px;" width="14.2" height="14.2" viewBox="0 0 30 30"><defs><linearGradient id="eg1" x1="0" y1="0" x2="1" y2="1"><stop offset="0" stop-color="#35c1f1"/><stop offset=".5" stop-color="#1b9de2"/><stop offset="1" stop-color="#0c59a4"/></linearGradient><linearGradient id="eg2" x1="0" y1="0" x2="1" y2="0"><stop offset="0" stop-color="#2bc3d2"/><stop offset="1" stop-color="#57d06b"/></linearGradient></defs><circle cx="15" cy="15" r="14.5" fill="url(#eg1)"/><path d="M0.8 13 Q3 1 15 0.5 Q27 1 29.3 11 Q29.6 15 26 17 L18 17 Q19.5 10.5 13 9.5 Q5 9 0.8 13 Z" fill="url(#eg2)"/><path d="M11 14 Q9 20 13.5 24.5 Q18 28 24.5 26 Q20 30.5 12 29 Q4 26.5 3.6 18 Q5.5 13 11 14 Z" fill="#0c59a4" opacity=".9"/><path d="M12 15.5 Q14 12.5 17 14.5 Q18.5 17 16.5 19 Q18 22.5 23 22 Q26 21.5 27.5 19.5 Q26 25 20 25.5 Q12 25 12 15.5 Z" fill="#0b2f5e"/></svg>
<div style="left:249px;top:488px;width:24px;height:2px;background:#76b4e8;"></div>
<svg style="left:283.2px;top:472px;" width="13" height="11.6" viewBox="0 0 26 23"><path d="M0.5 3.5 V22.5 H25.5 V3.5 H11 L9 0.8 H2 Q0.5 0.8 0.5 2.2 Z" fill="#e9ac2e"/><path d="M0.5 7 H25.5 V22.5 H0.5 Z" fill="#fbd15b"/><path d="M5 22.5 V15 Q5 12.5 7.5 12.5 H18.5 Q21 12.5 21 15 V22.5 H16.5 V18 H9.5 V22.5 Z" fill="#3a8fe0"/></svg>
<div style="left:305px;top:466px;width:28.2px;height:24px;background:#36454f;"></div>
<div style="left:305px;top:488px;width:28.2px;height:2px;background:#86bbee;"></div>
<svg style="left:312.4px;top:471.1px;" width="13.2" height="13.7" viewBox="0 0 26.4 27.4"><rect width="26.4" height="27.4" fill="#0f6e4f"/><path d="M4 3.2 H17.5 L22.4 8 V24.2 H4 Z" fill="none" stroke="#fff" stroke-width="1.5"/><path d="M17.5 3.2 V8 H22.4 Z" fill="#fff"/><path d="M13.2 21.5 V11 M8.4 15 L13.2 9.8 L18 15" fill="none" stroke="#fff" stroke-width="2.4"/></svg>
<svg style="left:496px;top:476.2px;" width="8.4" height="4.8" viewBox="0 0 8.4 4.8"><path d="M0.5 4.3 L4.2 0.7 L7.9 4.3" fill="none" stroke="#fff" stroke-width="1"/></svg>
<svg style="left:509.2px;top:473.6px;" width="10.8" height="9" viewBox="0 0 21.6 18"><rect x="5" y="1" width="15.6" height="11" fill="none" stroke="#fff" stroke-width="1.6"/><path d="M9 16.5 H17 M13 12 V16.5" stroke="#fff" stroke-width="1.6"/><rect x="0.8" y="7" width="6" height="9.5" fill="#0b1a28" stroke="#fff" stroke-width="1.5"/></svg>
<svg style="left:523.8px;top:473.4px;" width="10" height="9.6" viewBox="0 0 20 19.2"><path d="M1 6 H4.5 L9 1.8 V15.2 L4.5 11 H1 Z" fill="none" stroke="#fff" stroke-width="1.5"/><circle cx="15" cy="13.6" r="4.6" fill="#e81123"/><path d="M13 11.6 L17 15.6 M17 11.6 L13 15.6" stroke="#fff" stroke-width="1.2"/></svg>
<span class="t" style="left:541.70px;top:467px;font-size:7.60px;color:#fff;transform:scaleX(0.9184);">6:37 AM</span>
<span class="t" style="left:539.70px;top:478px;font-size:7.60px;color:#fff;transform:scaleX(0.8965);">10/1/2024</span>
<svg style="left:580.6px;top:473.2px;" width="10" height="9.4" viewBox="0 0 20 18.8"><path d="M1 1 H19 V13.5 H8 L4 17.5 V13.5 H1 Z" fill="#fff"/><path d="M4 4.6 H16 M4 7.4 H16 M4 10.2 H12" stroke="#0b1a28" stroke-width="1.1"/></svg>
<div style="left:585px;top:477.2px;width:9.6px;height:9.6px;border-radius:50%;background:#0d1b28;border:0.9px solid #fff;box-sizing:border-box;"></div>
<span class="t" style="left:587.90px;top:477px;font-size:7.00px;color:#fff;transform:scaleX(0.9728);">3</span>
<div style="left:603.4px;top:465.5px;width:0.8px;height:25.5px;background:#5a6672;"></div>
</body></html>
